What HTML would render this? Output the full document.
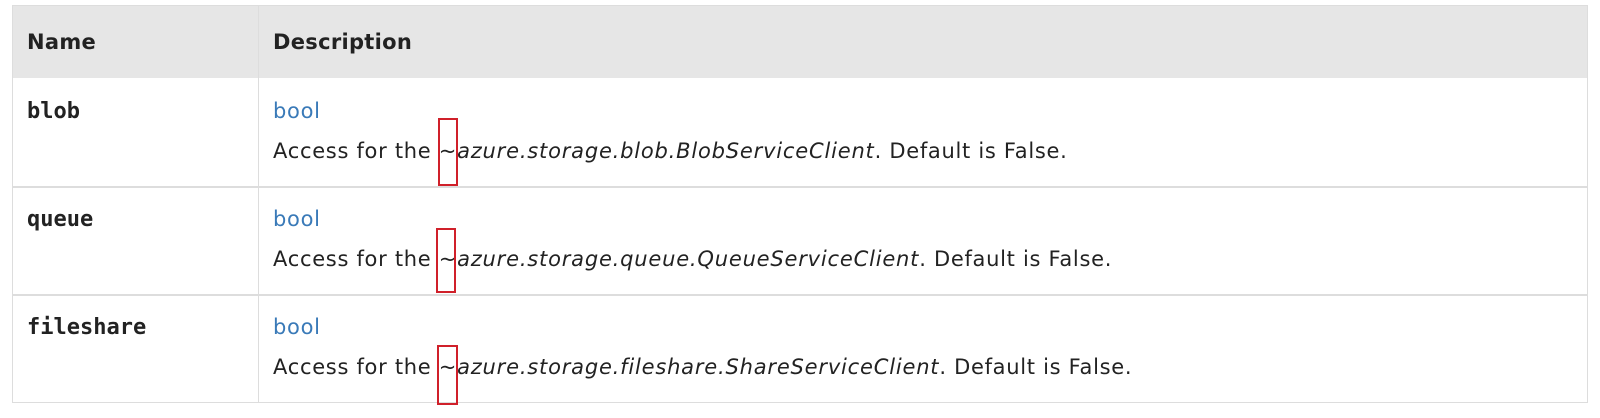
<!DOCTYPE html><html><head><style>
body{margin:0;width:1600px;height:418px;background:#fff;position:relative;font-family:"DejaVu Sans","Liberation Sans",sans-serif;color:#222;overflow:hidden}
.t{position:absolute;left:12px;top:5px;width:1576px;height:398px;border:1px solid #ddd;box-sizing:border-box}
.h{position:absolute;left:0;top:0;width:100%;height:72px;background:#e6e6e6}
.vl{position:absolute;left:245px;top:0;width:1px;height:100%;background:#ddd}
.hl{position:absolute;left:0;width:100%;height:2px;background:#ddd}
.tx{position:absolute;white-space:nowrap;font-size:21px;letter-spacing:0.7px}
.tx i{letter-spacing:0.8px}
.b{font-weight:bold;letter-spacing:0.3px}
.m{font-family:"DejaVu Sans Mono","Liberation Mono",monospace;font-weight:bold;font-size:22px;letter-spacing:0}
.l{color:#3a7ab8}
.r{position:absolute;border:2px solid #d0202a;box-sizing:border-box}
</style></head><body>
<div class="t"><div class="h"></div><div class="vl"></div>
<div class="hl" style="top:180px"></div><div class="hl" style="top:288px"></div></div>
<div class="tx b" style="left:27px;top:30px">Name</div>
<div class="tx b" style="left:273px;top:30px">Description</div>
<div class="tx m" style="left:27px;top:99px">blob</div>
<div class="tx m" style="left:27px;top:207px">queue</div>
<div class="tx m" style="left:27px;top:315px">fileshare</div>
<div class="tx l" style="left:273px;top:99px">bool</div>
<div class="tx" style="left:273px;top:139px">Access for the ~<i>azure.storage.blob.BlobServiceClient</i>. Default is False.</div>
<div class="tx l" style="left:273px;top:207px">bool</div>
<div class="tx" style="left:273px;top:247px">Access for the ~<i>azure.storage.queue.QueueServiceClient</i>. Default is False.</div>
<div class="tx l" style="left:273px;top:315px">bool</div>
<div class="tx" style="left:273px;top:355px">Access for the ~<i>azure.storage.fileshare.ShareServiceClient</i>. Default is False.</div>
<div class="r" style="left:438px;top:118px;height:68px;width:20px"></div>
<div class="r" style="left:436px;top:228px;height:65px;width:20px"></div>
<div class="r" style="left:437px;top:345px;height:60px;width:21px"></div>
</body></html>
